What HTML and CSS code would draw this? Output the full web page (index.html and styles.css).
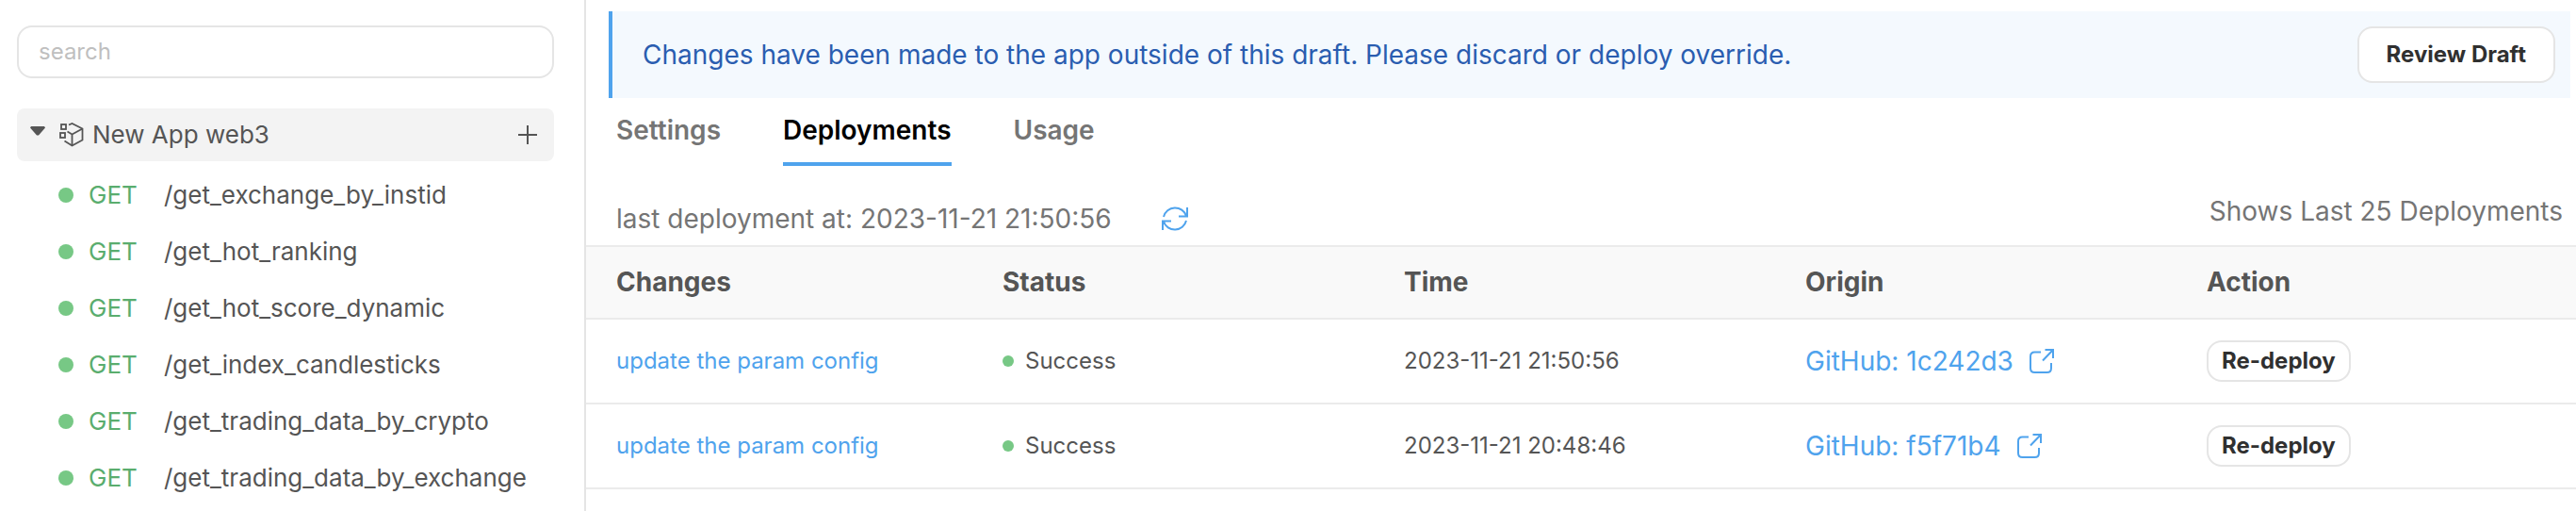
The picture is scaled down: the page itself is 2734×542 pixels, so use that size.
FILE: index.html
```html
<!DOCTYPE html>
<html lang="en">
<head>
<meta charset="utf-8">
<title>Deployments</title>
<link rel="stylesheet" href="styles.css">
</head>
<body>
<svg class="defs" aria-hidden="true">
  <symbol id="external" viewBox="0 0 28 28"><path d="M13 4.500H6.500Q2 4.500 2 9V21.500Q2 26 6.500 26H19.500Q24 26 24 21.500V16M17.500 2H26V11M26 2L15 13.500" fill="none" stroke="currentColor" stroke-width="2"/></symbol>
</svg>
<div class="app">
  <aside class="sidebar">
    <input class="search" type="text" placeholder="search" aria-label="search">
    <div class="group">
      <svg class="caret" viewBox="0 0 16 10"><path d="M1 0H15L16 1.500L9 9.500H7L0 1.500Z" fill="#555"/></svg>
      <svg class="cube" viewBox="0 0 26 26"><g fill="none" stroke="#555" stroke-width="1.800"><rect x="2" y="2" width="5" height="5"/><rect x="1" y="11" width="5" height="5"/><path d="M10 2.500L13.500 1L24.500 6.500V18.500L13.500 24.500L5.500 19.500M8.500 9.500L13.500 12.500L24.500 6.500M13.500 12.500V24.500"/></g></svg>
      <span class="group-name">New App web3</span>
      <button class="add" aria-label="Add endpoint"><svg viewBox="0 0 20 20"><path d="M10 0V20M0 10H20" stroke="#555" stroke-width="2"/></svg></button>
    </div>
    <ul class="routes">
      <li><i class="dot"></i><span class="method">GET</span><span>/get_exchange_by_instid</span></li>
      <li><i class="dot"></i><span class="method">GET</span><span>/get_hot_ranking</span></li>
      <li><i class="dot"></i><span class="method">GET</span><span>/get_hot_score_dynamic</span></li>
      <li><i class="dot"></i><span class="method">GET</span><span>/get_index_candlesticks</span></li>
      <li><i class="dot"></i><span class="method">GET</span><span>/get_trading_data_by_crypto</span></li>
      <li><i class="dot"></i><span class="method">GET</span><span>/get_trading_data_by_exchange</span></li>
    </ul>
  </aside>
  <main class="main">
    <div class="banner">
      <span>Changes have been made to the app outside of this draft. Please discard or deploy override.</span>
      <button class="btn">Review Draft</button>
    </div>
    <nav class="tabs">
      <a href="#settings">Settings</a>
      <a class="active" href="#deployments">Deployments</a>
      <a href="#usage">Usage</a>
    </nav>
    <div class="meta">
      <div class="last">
        <span>last deployment at: 2023-11-21 21:50:56</span>
        <button class="refresh" aria-label="Refresh"><svg viewBox="0 0 30 28"><path d="M3 12A12.500 12.500 0 0 1 27 11M28 2V11.500H19M27 16A12.500 12.500 0 0 1 3 17M2 26V16.500H11" fill="none" stroke="currentColor" stroke-width="2"/></svg></button>
      </div>
      <span class="count">Shows Last 25 Deployments</span>
    </div>
    <table class="table">
      <colgroup><col class="col-first"><col class="col"><col class="col"><col class="col"><col></colgroup>
      <thead><tr><th>Changes</th><th>Status</th><th>Time</th><th>Origin</th><th>Action</th></tr></thead>
      <tbody>
        <tr>
          <td><a href="#d1">update the param config</a></td>
          <td><span class="status"><i class="dot small"></i>Success</span></td>
          <td>2023-11-21 21:50:56</td>
          <td><a class="origin" href="#1c242d3">GitHub: 1c242d3<svg><use href="#external"/></svg></a></td>
          <td><button class="btn compact">Re-deploy</button></td>
        </tr>
        <tr>
          <td><a href="#d2">update the param config</a></td>
          <td><span class="status"><i class="dot small"></i>Success</span></td>
          <td>2023-11-21 20:48:46</td>
          <td><a class="origin" href="#f5f71b4">GitHub: f5f71b4<svg><use href="#external"/></svg></a></td>
          <td><button class="btn compact">Re-deploy</button></td>
        </tr>
      </tbody>
    </table>
  </main>
</div>
</body>
</html>
```
FILE: styles.css
```css
* { box-sizing: border-box; }
body { margin: 0; background: #fff; color: #555; font-family: Inter, "Liberation Sans", sans-serif; font-size: 26px; line-height: 32px; }
button, input { font: inherit; }
button { padding: 0; border: 0; background: none; color: inherit; }
a { color: #4fa3ed; text-decoration: none; }
svg { display: block; flex: none; }
.defs { position: absolute; width: 0; height: 0; }
.app { display: flex; min-height: 100vh; }

.sidebar { flex: none; width: 622px; padding: 27px 32px 0 18px; border-right: 2px solid #e5e5e5; }
.search { display: block; width: 100%; height: 56px; padding: 0 21px 2px; border: 2px solid #e5e5e5; border-radius: 16px; background: #fff; font-size: 24px; }
.search::placeholder { color: #bfbfbf; opacity: 1; }
.group { display: flex; align-items: center; height: 56px; margin-top: 32px; padding: 0 18px 0 14px; border-radius: 8px; background: #f3f3f3; }
.caret { width: 16px; height: 10px; margin: 0 15px 8px 0; }
.cube { width: 26px; height: 26px; margin-right: 9px; }
.group-name { flex: 1; }
.add svg { width: 20px; height: 20px; }
.routes { margin: 6px 0 0; padding: 0 0 0 44px; list-style: none; }
.routes li { display: flex; align-items: center; height: 60px; }
.dot { flex: none; width: 16px; height: 16px; margin-right: 16px; border-radius: 50%; background: #77c885; }
.dot.small { width: 12px; height: 12px; margin-right: 12px; }
.method { width: 80px; color: #5aad6e; }

.main { flex: 1; min-width: 0; padding-top: 12px; }
.banner { display: flex; align-items: center; justify-content: space-between; height: 92px; margin: 0 6px 0 24px; padding: 0 16px 0 32px; border-left: 4px solid #4fa3ed; background: #f4f9fe; color: #2a5db0; font-size: 28px; }
.btn { height: 60px; padding: 0 29px; border: 2px solid #e5e5e5; border-radius: 16px; background: #fff; color: #303030; font-size: 24px; font-weight: 700; }
.btn.compact { display: block; height: 44px; padding: 0 14px; }
.tabs { display: flex; gap: 66px; padding-left: 32px; font-size: 28px; font-weight: 600; }
.tabs a { height: 72px; padding-top: 18px; border-bottom: 4px solid transparent; color: #757575; }
.tabs .active { border-color: #4fa3ed; color: #000; }
.meta { display: flex; justify-content: space-between; align-items: flex-start; height: 84px; padding: 32px 14px 0 32px; color: #757575; font-size: 28px; }
.last { display: flex; align-items: center; gap: 52px; padding-top: 8px; }
.refresh { color: #4fa3ed; }
.refresh svg { width: 30px; height: 28px; }

.table { width: 100%; border-collapse: separate; border-spacing: 0; table-layout: fixed; }
.table th { height: 79px; padding: 0 0 2px 32px; border-top: 2px solid #ebebeb; border-bottom: 2px solid #ebebeb; background: #f9f9f9; font-size: 28px; font-weight: 700; text-align: left; }
.col-first { width: 410px; }
.col { width: 426px; }
.table td { height: 90px; padding: 0 0 0 32px; border-bottom: 2px solid #ebebeb; font-size: 24px; }
.status { display: flex; align-items: center; }
.origin { display: flex; align-items: center; gap: 16px; font-size: 28px; }
.origin svg { width: 28px; height: 28px; }
```
